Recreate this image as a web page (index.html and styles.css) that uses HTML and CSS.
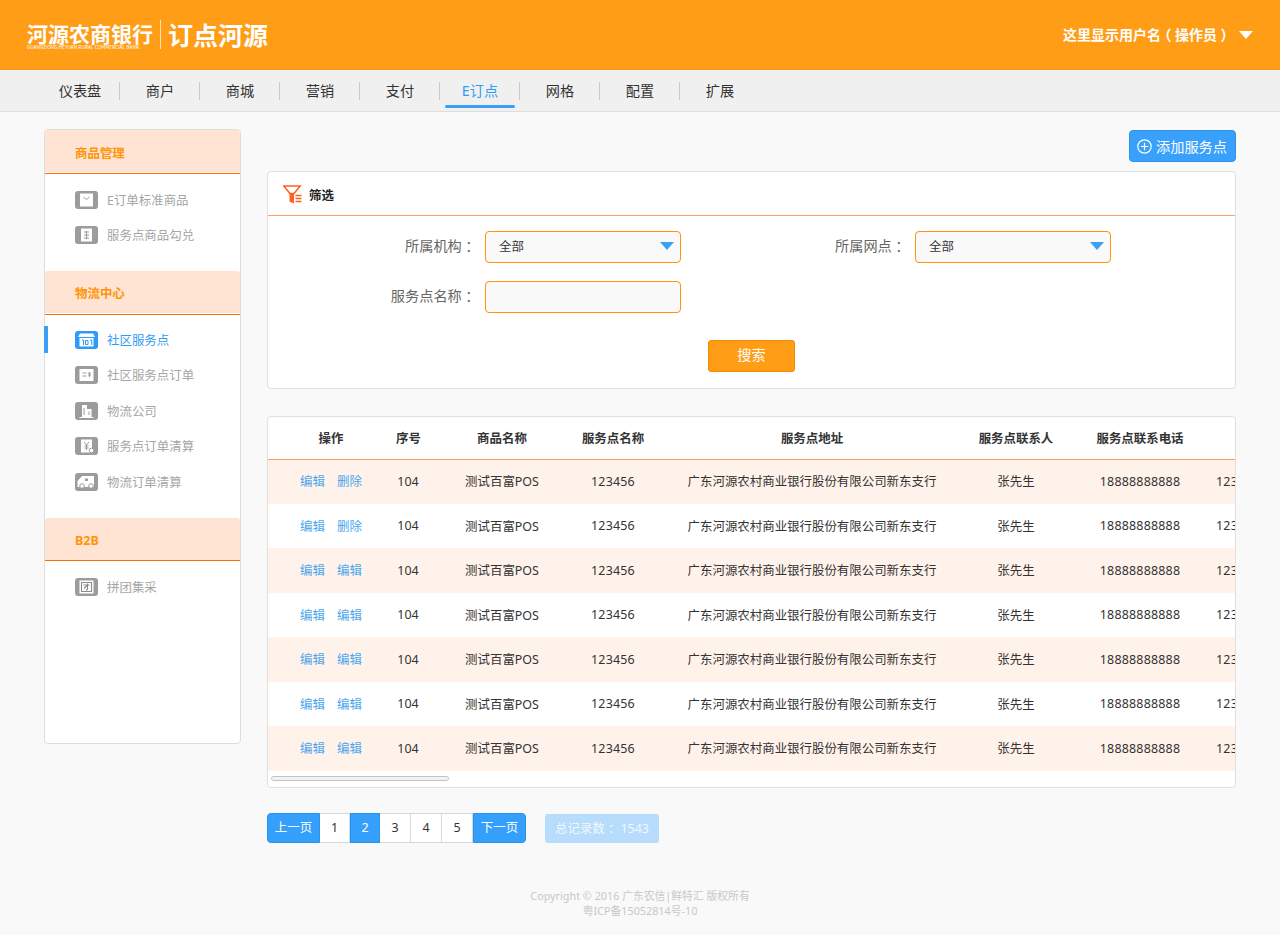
FILE: index.html
```html
<!DOCTYPE html>
<html lang="zh-CN">
<head>
<meta charset="utf-8">
<title>订点河源</title>
<link rel="stylesheet" href="styles.css">
</head>
<body>
<header class="topbar">
  <div class="logo">
    <div class="logo-bank">
      <div class="logo-cn">河源农商银行</div>
      <div class="logo-en">GUANGDONG HEYUAN RURAL COMMERCIAL BANK</div>
    </div>
    <div class="logo-sub">订点河源</div>
  </div>
  <div class="user"><span class="user-name">这里显示用户名<span class="half">（</span>操作员<span class="half">）</span></span><i class="user-caret"></i></div>
</header>
<nav class="nav">
  <a class="nav-item">仪表盘</a><a class="nav-item">商户</a><a class="nav-item">商城</a><a class="nav-item">营销</a><a class="nav-item">支付</a><a class="nav-item active">E订点</a><a class="nav-item">网格</a><a class="nav-item">配置</a><a class="nav-item last">扩展</a>
</nav>
<div class="page">
  <aside class="side">
    <div class="side-head gap top">商品管理</div>
    <ul class="side-list first">
      <li class="side-item"><svg class="ico" viewBox="0 0 23 18"><rect width="23" height="18" rx="3" fill="currentColor"/><rect x="5" y="2.500" width="13" height="13" fill="#fff"/><path d="M8.500 6l3 2.500 3-2.500" fill="none" stroke="#9c9c9c"/></svg>E订单标准商品</li>
      <li class="side-item"><svg class="ico" viewBox="0 0 23 18"><rect width="23" height="18" rx="3" fill="currentColor"/><rect x="6" y="2.500" width="11" height="13" fill="#fff"/><path d="M9 6h5M9 9h5M9 12h5M11.500 5v8" fill="none" stroke="#9c9c9c"/></svg>服务点商品勾兑</li>
    </ul>
    <div class="side-head gap">物流中心</div>
    <ul class="side-list">
      <li class="side-item active"><svg class="ico" viewBox="0 0 23 18"><rect width="23" height="18" rx="3" fill="currentColor"/><path d="M5 2.500h13l2 3.500H3z" fill="#fff"/><path d="M4.500 7h14v8.500h-14z" fill="#fff"/><path d="M7 9h1.500v5M10.500 9.500h2.500v4h-2.500zM15 9h1.800v5" fill="none" stroke="#2d9bf8"/></svg>社区服务点</li>
      <li class="side-item"><svg class="ico" viewBox="0 0 23 18"><rect width="23" height="18" rx="3" fill="currentColor"/><rect x="4.500" y="3" width="14" height="12" fill="#fff"/><path d="M7.500 7h4M7.500 10h4M13 7h3M14.500 7v4M13 9h3" fill="none" stroke="#9c9c9c"/></svg>社区服务点订单</li>
      <li class="side-item"><svg class="ico" viewBox="0 0 23 18"><rect width="23" height="18" rx="3" fill="currentColor"/><path d="M7 15V3h5v4h4.500v8z M4.500 15h14v1h-14z" fill="#fff"/><path d="M9 6v7M14 9.500v3.500" fill="none" stroke="#9c9c9c"/></svg>物流公司</li>
      <li class="side-item"><svg class="ico" viewBox="0 0 23 18"><rect width="23" height="18" rx="3" fill="currentColor"/><rect x="6" y="2.500" width="11" height="13" fill="#fff"/><path d="M9 5l2.500 3 2.500-3M11.500 8v5M9.500 9h4M9.500 11h4" fill="none" stroke="#9c9c9c"/><circle cx="16.500" cy="13.500" r="2.300" fill="#fff" stroke="#9c9c9c"/></svg>服务点订单清算</li>
      <li class="side-item"><svg class="ico" viewBox="0 0 23 18"><rect width="23" height="18" rx="3" fill="currentColor"/><path d="M7 3h12v11H2.500V8z" fill="#fff"/><circle cx="7" cy="13" r="2.300" fill="#fff" stroke="#9c9c9c"/><circle cx="16" cy="13" r="2.300" fill="#fff" stroke="#9c9c9c"/><path d="M10 5.500h3v2.500h-3z" fill="#9c9c9c"/></svg>物流订单清算</li>
    </ul>
    <div class="side-head">B2B</div>
    <ul class="side-list">
      <li class="side-item"><svg class="ico" viewBox="0 0 23 18"><rect width="23" height="18" rx="3" fill="currentColor"/><rect x="4.500" y="2.500" width="14" height="13" fill="#fff"/><path d="M6.500 4.500h10v9h-10zM8.500 7h6M12.500 5.500v6l-1.500 1M12 7.500l-3 3" fill="none" stroke="#8c8c8c" stroke-width="1.100"/></svg>拼团集采</li>
    </ul>
  </aside>
  <main class="main">
    <div class="toolbar">
      <button class="add-btn"><svg class="add-ico" viewBox="0 0 15 15"><circle cx="7.500" cy="7.500" r="6.700" fill="none" stroke="#fff" stroke-width="1.200"/><path d="M3.800 7.500h7.400M7.500 3.800v7.400" stroke="#fff" stroke-width="1.200"/></svg>添加服务点</button>
    </div>
    <section class="panel filter">
      <div class="filter-head">
        <svg class="filter-ico" viewBox="0 0 19 19"><path d="M.8 1h16.400l-6.200 7.500H7z" fill="none" stroke="#ff5f1f" stroke-width="1.500"/><path d="M6.500 8h4.500v10.500l-4.500-2z" fill="#ff5f1f"/><path d="M12.500 10.500h6M12.500 13.500h6M12.500 16.500h6" stroke="#ff5f1f" stroke-width="1.400"/></svg>
        <span class="filter-title">筛选</span>
      </div>
      <div class="filter-form">
        <label class="f-label">所属机构<span class="half">：</span></label>
        <div class="f-select">全部<i class="f-caret"></i></div>
        <label class="f-label">所属网点<span class="half">：</span></label>
        <div class="f-select">全部<i class="f-caret"></i></div>
        <label class="f-label">服务点名称<span class="half">：</span></label>
        <div class="f-input"></div>
      </div>
      <div class="filter-foot"><button class="search-btn">搜索</button></div>
    </section>
    <section class="panel table-panel">
      <div class="table-clip">
        <table class="grid">
          <thead>
            <tr><th>操作</th><th>序号</th><th>商品名称</th><th>服务点名称</th><th>服务点地址</th><th>服务点联系人</th><th>服务点联系电话</th><th></th></tr>
          </thead>
          <tbody>
            <tr><td><a>编辑</a><a>删除</a></td><td>104</td><td>测试百富POS</td><td>123456</td><td>广东河源农村商业银行股份有限公司新东支行</td><td>张先生</td><td>18888888888</td><td>123456</td></tr>
            <tr><td><a>编辑</a><a>删除</a></td><td>104</td><td>测试百富POS</td><td>123456</td><td>广东河源农村商业银行股份有限公司新东支行</td><td>张先生</td><td>18888888888</td><td>123456</td></tr>
            <tr><td><a>编辑</a><a>编辑</a></td><td>104</td><td>测试百富POS</td><td>123456</td><td>广东河源农村商业银行股份有限公司新东支行</td><td>张先生</td><td>18888888888</td><td>123456</td></tr>
            <tr><td><a>编辑</a><a>编辑</a></td><td>104</td><td>测试百富POS</td><td>123456</td><td>广东河源农村商业银行股份有限公司新东支行</td><td>张先生</td><td>18888888888</td><td>123456</td></tr>
            <tr><td><a>编辑</a><a>编辑</a></td><td>104</td><td>测试百富POS</td><td>123456</td><td>广东河源农村商业银行股份有限公司新东支行</td><td>张先生</td><td>18888888888</td><td>123456</td></tr>
            <tr><td><a>编辑</a><a>编辑</a></td><td>104</td><td>测试百富POS</td><td>123456</td><td>广东河源农村商业银行股份有限公司新东支行</td><td>张先生</td><td>18888888888</td><td>123456</td></tr>
            <tr><td><a>编辑</a><a>编辑</a></td><td>104</td><td>测试百富POS</td><td>123456</td><td>广东河源农村商业银行股份有限公司新东支行</td><td>张先生</td><td>18888888888</td><td>123456</td></tr>
          </tbody>
        </table>
      </div>
      <div class="scroll-track"><div class="scroll-thumb"></div></div>
    </section>
    <div class="pager-row">
      <div class="pager">
        <a class="pg pg-blue pg-first">上一页</a><a class="pg pg-num">1</a><a class="pg pg-cur">2</a><a class="pg pg-num">3</a><a class="pg pg-num">4</a><a class="pg pg-num">5</a><a class="pg pg-blue pg-last">下一页</a>
      </div>
      <div class="total">总记录数<span class="half">：</span> 1543</div>
    </div>
  </main>
</div>
<footer class="foot">Copyright © 2016 广东农信|鲜特汇 版权所有<br>粤ICP备15052814号-10</footer>
</body>
</html>
```
FILE: styles.css
```css
* { box-sizing: border-box; }
html, body { margin: 0; padding: 0; }
body {
  background: #f9f9f9;
  color: #333;
  font-family: "Noto Sans", "Noto Sans CJK SC", sans-serif;
  font-size: 12.45px;
  height: 935px;
  overflow: hidden;
}
ul { list-style: none; margin: 0; padding: 0; }
button { font-family: inherit; cursor: pointer; }
.half { font-feature-settings: "halt"; margin: 0 .25em; }

.topbar {
  height: 70px;
  background: #ff9d17;
  border-bottom: 1px solid #f59a1e;
  display: flex;
  align-items: center;
  justify-content: space-between;
  padding: 0 27px;
  color: #fff;
}
.logo { display: flex; align-items: center; }
.logo-bank {
  width: 134px;
  height: 29px;
  padding-top: 1.5px;
  border-right: 1px solid #ffe2ba;
  font-family: "Noto Sans CJK SC", sans-serif;
}
.logo-cn { font-size: 21px; font-weight: 700; line-height: 22px; white-space: nowrap; }
.logo-en { font-size: 4.900px; line-height: 5px; white-space: nowrap; letter-spacing: -.02px; }
.logo-sub {
  font-family: "Noto Sans CJK SC", sans-serif;
  font-size: 25px;
  font-weight: 700;
  line-height: 29px;
  margin-left: 7px;
  white-space: nowrap;
}
.user { display: flex; align-items: center; flex: none; font-family: "Noto Sans CJK SC", sans-serif; font-size: 14px; font-weight: 700; white-space: nowrap; }
.user-name { margin-top: -2px; }
.user-caret {
  flex: none;
  width: 0; height: 0; margin-left: 8px;
  border-left: 7px solid transparent;
  border-right: 7px solid transparent;
  border-top: 8px solid #fff;
}

.nav {
  height: 42px;
  background: #f0f0f0;
  border-bottom: 1px solid #e0dcd6;
  display: flex;
  padding-left: 40px;
}
.nav-item {
  position: relative;
  width: 80px;
  height: 41px;
  line-height: 41px;
  text-align: center;
  font-size: 14.200px;
  color: #333;
}
.nav-item::after {
  content: "";
  position: absolute;
  right: 0;
  top: 12px;
  width: 1px;
  height: 18px;
  background: #c9c9c9;
}
.nav-item.last::after { display: none; }
.nav-item.active { color: #2f9cf5; }
.nav-item.active::before {
  content: "";
  position: absolute;
  left: 5px;
  bottom: 3px;
  width: 70px;
  height: 3px;
  border-radius: 2px;
  background: #3aa0f6;
}

.page { display: flex; align-items: flex-start; padding: 17px 44px 0; gap: 26px; }

.side {
  flex: none;
  width: 197px;
  height: 615px;
  background: #fff;
  border: 1px solid #dedede;
  border-radius: 4px;
}
.side-head {
  height: 43.500px;
  line-height: 45px;
  padding-left: 30px;
  background: #ffe3d3;
  border-bottom: 1.500px solid #ff6a10;
  border-radius: 3px 3px 0 0;
  color: #ff9408;
  font-weight: 700;
}
.side-head.gap { box-shadow: inset 0 -1px 0 #fff; line-height: 46px; }
.side-head.top { line-height: 48px; }
.side-list { padding: 7.600px 0 18.400px; }
.side-list.first { padding: 8.500px 0 18px; }
.side-item {
  position: relative;
  display: flex;
  align-items: center;
  height: 35.500px;
  padding-left: 30px;
  color: #a6a6a6;
}
.side-item.active { color: #2f9cf5; }
.side-item.active::before {
  content: "";
  position: absolute;
  left: -1px;
  top: 4px;
  width: 4px;
  height: 27px;
  background: #3aa0f6;
}
.ico { flex: none; width: 23px; height: 18px; margin-right: 9px; color: #9c9c9c; }
.active .ico { color: #2d9bf8; }

.main { flex: none; width: 969px; padding-top: 1px; }
.toolbar { display: flex; justify-content: flex-end; margin-bottom: 9px; }
.add-btn {
  display: flex;
  align-items: center;
  width: 107px;
  height: 32px;
  padding: 0 0 0 7px;
  background: #39a1fb;
  border: 1px solid #2c92ea;
  border-radius: 4px;
  color: #fff;
  font-size: 14.200px;
}
.add-ico { width: 15px; height: 15px; margin-right: 4px; }

.panel { background: #fff; border: 1px solid #e0e0e0; border-radius: 4px; }
.filter { height: 218px; }
.filter-head {
  display: flex;
  align-items: center;
  height: 44px;
  padding: 1px 0 0 15px;
  border-bottom: 1.500px solid #ff9f6a;
  color: #222;
  font-weight: 700;
}
.filter-ico { width: 19px; height: 19px; margin-right: 7px; }
.filter-title { margin-top: 2px; }
.filter-form {
  display: grid;
  grid-template-columns: 217px 196px 234px 196px;
  grid-auto-rows: 32px;
  row-gap: 18px;
  padding-top: 15px;
}
.f-label {
  padding-right: 9px;
  text-align: right;
  line-height: 29px;
  font-size: 14.200px;
  color: #666;
}
.f-select, .f-input {
  position: relative;
  background: #f9f9f9;
  border: 1px solid #ff9408;
  border-radius: 4px;
}
.f-select { padding-left: 13px; line-height: 29px; color: #333; }
.f-caret {
  position: absolute;
  right: 6px;
  top: 10px;
  width: 0; height: 0;
  border-left: 7px solid transparent;
  border-right: 7px solid transparent;
  border-top: 8px solid #3aa0f6;
}
.filter-foot { display: flex; justify-content: center; margin-top: 27px; }
.search-btn {
  width: 87px;
  height: 32px;
  padding: 0 0 4px;
  background: #ff9d17;
  border: 1px solid #f28c00;
  border-radius: 3px;
  color: #fff;
  font-size: 14.200px;
}

.table-panel { margin-top: 27px; height: 372px; overflow: hidden; }
.table-clip { overflow: hidden; }
.grid { table-layout: fixed; border-collapse: collapse; width: 1024px; }
.grid th, .grid td { padding: 0; text-align: center; font-weight: 400; white-space: nowrap; }
.grid th { height: 42px; border-bottom: 1.500px solid #ff9a5c; font-weight: 700; color: #333; }
.grid td { height: 44px; padding-bottom: 1px; color: #333; }
.grid tbody tr:nth-child(odd) { background: #fff2ea; }
.grid tbody tr:nth-child(odd) td { height: 45px; }
.grid th:nth-child(1) { width: 108px; padding-left: 18px; }
.grid td:nth-child(1) { padding-left: 18px; }
.grid th:nth-child(2) { width: 64px; padding-left: 1px; }
.grid th:nth-child(3) { width: 124px; }
.grid th:nth-child(4) { width: 98px; }
.grid th:nth-child(5) { width: 300px; }
.grid th:nth-child(6) { width: 108px; }
.grid th:nth-child(7) { width: 140px; }
.grid th:nth-child(8) { width: 82px; }
.grid td:nth-child(4), .grid td:nth-child(7), .grid td:nth-child(8) { letter-spacing: .2px; }
.grid td:nth-child(8) { text-align: left; padding-left: 6px; }
.grid td a { color: #4ba6ee; }
.grid td a + a { margin-left: 12px; }
.scroll-track { padding: 5px 0 0 3px; }
.scroll-thumb {
  width: 178px;
  height: 5px;
  background: #f3f3f3;
  border: 1px solid #c4c4c4;
  border-radius: 3px;
}

.pager-row { display: flex; align-items: center; margin-top: 25px; }
.pager { display: flex; height: 30px; }
.pg {
  display: block;
  line-height: 28px;
  text-align: center;
  font-size: 12.450px;
}
.pg-blue, .pg-cur { background: #34a0fb; color: #fff; border: 1px solid #2893ee; }
.pg-blue { width: 53px; }
.pg-first { border-radius: 4px 0 0 4px; }
.pg-last { border-radius: 0 4px 4px 0; }
.pg-cur { width: 30px; }
.pg-num {
  width: 31px;
  background: #fff;
  color: #333;
  border: 1px solid #d3d9e2;
  border-left: 0;
}
.pg-first + .pg-num { width: 30px; }
.total {
  width: 114px;
  height: 29px;
  margin-left: 19px;
  line-height: 29px;
  text-align: center;
  background: #b8dcfb;
  border-radius: 3px;
  color: #f0f8ff;
}

.foot {
  margin-top: 45px;
  text-align: center;
  font-size: 10.800px;
  line-height: 15px;
  color: #c8c8c8;
}
```
